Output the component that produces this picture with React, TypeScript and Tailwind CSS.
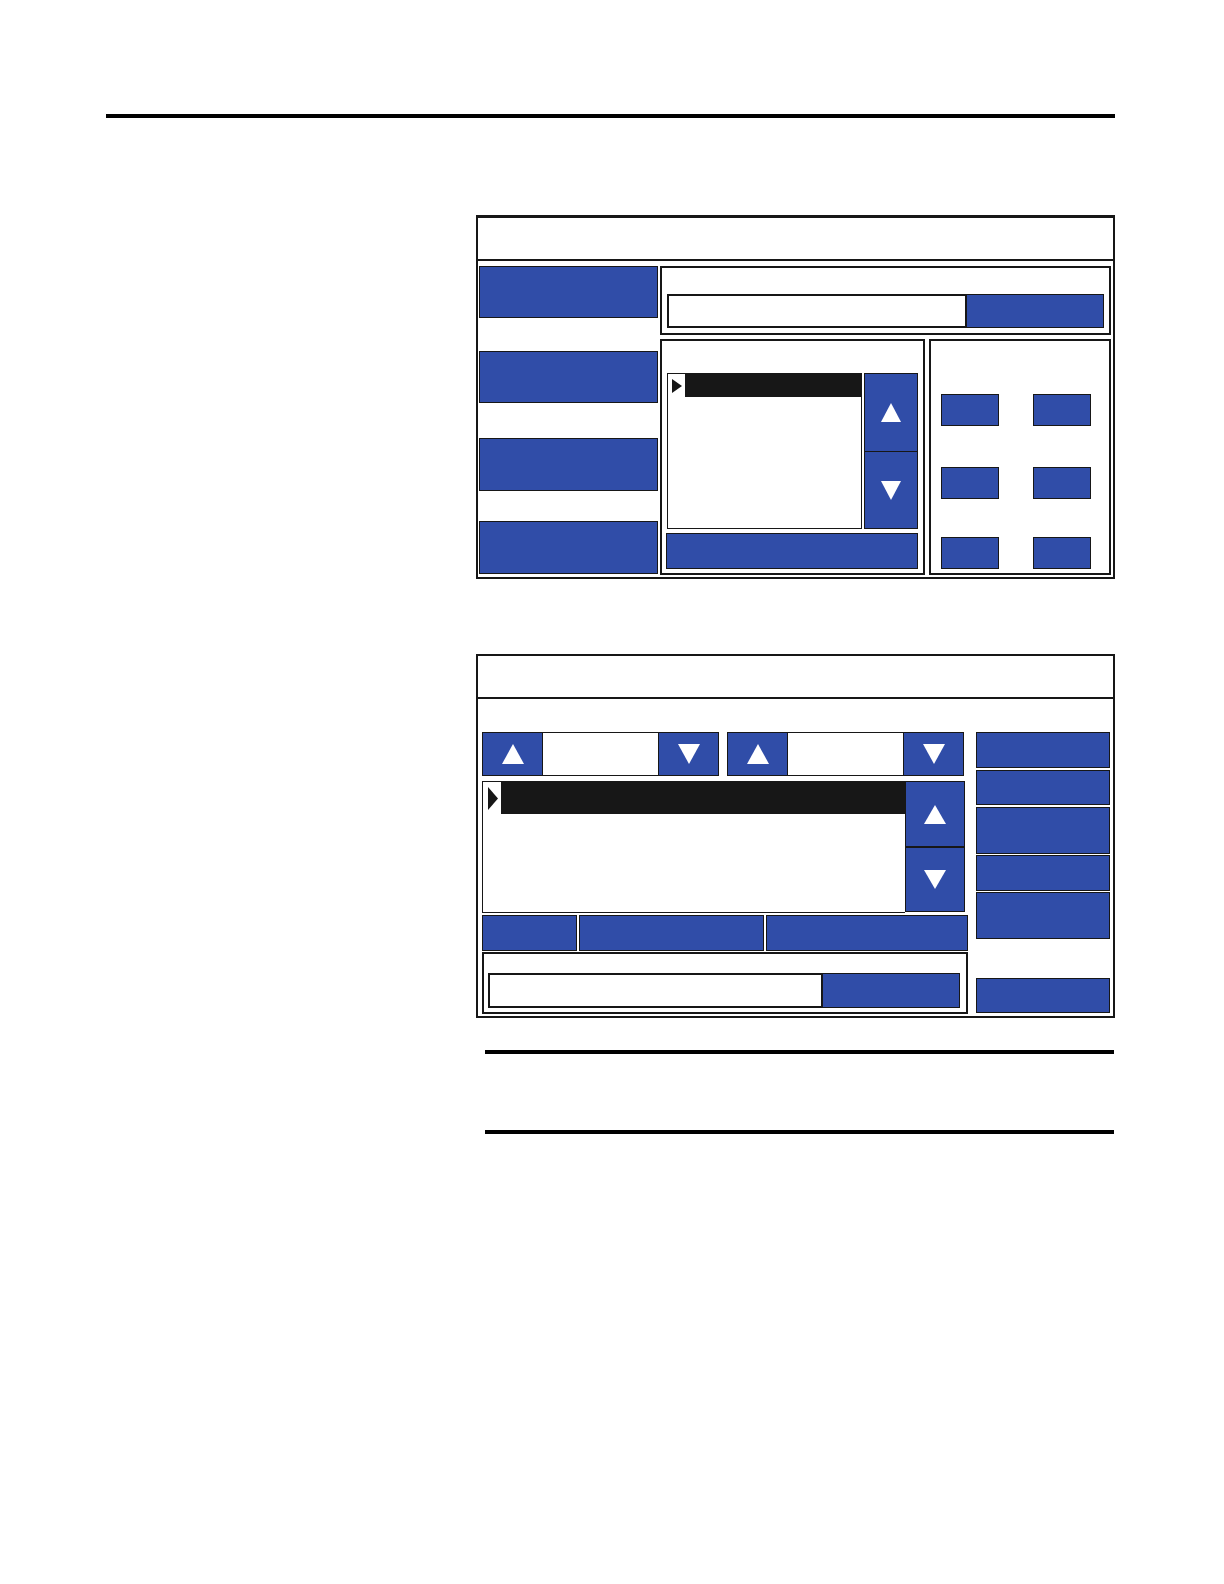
import { useState } from 'react'
import clsx from 'clsx'

type Direction = 'up' | 'down' | 'right'

const POINTS: Record<Direction, string> = {
  up: '0,20 10,0 20,20',
  down: '0,0 20,0 10,20',
  right: '0,0 20,10 0,20',
}

function Triangle({ direction, className }: { direction: Direction; className: string }) {
  return (
    <svg viewBox="0 0 20 20" preserveAspectRatio="none" className={className} aria-hidden="true">
      <polygon points={POINTS[direction]} fill="currentColor" />
    </svg>
  )
}

interface KeyProps {
  label: string
  className?: string
  children?: React.ReactNode
  onClick?: () => void
}

function Key({ label, className, children, onClick }: KeyProps) {
  return (
    <button
      type="button"
      aria-label={label}
      onClick={onClick}
      className={clsx(
        'flex items-center justify-center border-neutral-900 bg-[#304da8] text-white',
        className
      )}
    >
      {children}
    </button>
  )
}

function Entry({ label, size }: { label: string; size: string }) {
  return (
    <div className={clsx('flex', size)}>
      <input
        type="text"
        aria-label={label}
        className="min-w-0 flex-1 border-2 border-neutral-900 bg-white px-2 outline-none"
      />
      <Key label={`Confirm ${label}`} className="w-[137px] border border-l-0" />
    </div>
  )
}

function Stepper({ label }: { label: string }) {
  const [value, setValue] = useState('')
  const step = (by: number) => setValue(String(Number(value) + by))

  return (
    <div className="flex h-11 min-w-0 flex-1">
      <Key label={`${label} up`} className="w-[61px] shrink-0 border" onClick={() => step(1)}>
        <Triangle direction="up" className="h-5 w-[22px]" />
      </Key>
      <input
        type="text"
        aria-label={label}
        value={value}
        onChange={(e) => setValue(e.target.value)}
        className="w-0 min-w-0 flex-1 border-y border-neutral-900 bg-white text-center outline-none"
      />
      <Key label={`${label} down`} className="w-[61px] shrink-0 border" onClick={() => step(-1)}>
        <Triangle direction="down" className="h-5 w-[22px]" />
      </Key>
    </div>
  )
}

function SelectionScreen() {
  return (
    <section aria-label="Selection" className="border-2 border-t-[3px] border-neutral-900">
      <header className="h-[43px] border-b-2 border-neutral-900" />
      <div className="flex gap-0.5 pt-[5px] pr-0.5 pb-0.5 pl-px">
        <nav className="flex w-[179px] shrink-0 flex-col">
          <Key label="Menu 1" className="h-[52px] border" />
          <Key label="Menu 2" className="mt-[33px] h-[52px] border" />
          <Key label="Menu 3" className="mt-[35px] h-[53px] border" />
          <Key label="Menu 4" className="mt-[30px] h-[53px] border" />
        </nav>

        <div className="flex min-w-0 flex-1 flex-col gap-1">
          <div className="border-2 border-neutral-900 px-[5px] pt-[26px] pb-[5px]">
            <Entry label="name" size="h-[34px]" />
          </div>

          <div className="flex gap-1">
            <div className="min-w-0 flex-1 border-2 border-neutral-900 pt-8 pr-[5px] pb-1 pl-1">
              <div className="flex gap-0.5 pl-px">
                <ul role="listbox" aria-label="Items" className="h-[156px] min-w-0 flex-1 border border-neutral-900">
                  <li role="option" aria-selected="true" className="flex h-[23px]">
                    <span className="flex w-[17px] items-center justify-center text-neutral-900">
                      <Triangle direction="right" className="h-3.5 w-2.5" />
                    </span>
                    <span className="flex-1 bg-neutral-900" />
                  </li>
                </ul>
                <div className="flex w-[54px] shrink-0 flex-col">
                  <Key label="Scroll up" className="h-[78px] border border-b-0">
                    <Triangle direction="up" className="h-[19px] w-5" />
                  </Key>
                  <Key label="Scroll down" className="h-[78px] border">
                    <Triangle direction="down" className="h-[19px] w-5" />
                  </Key>
                </div>
              </div>
              <Key label="Select item" className="mt-1 h-9 w-full border" />
            </div>

            <div className="grid w-[182px] shrink-0 grid-cols-[58px_58px] grid-rows-[73px_70px_32px] gap-x-[34px] border-2 border-neutral-900 pt-[53px] pl-2.5">
              {[1, 2, 3, 4, 5, 6].map((n) => (
                <Key key={n} label={`Option ${n}`} className="h-8 border" />
              ))}
            </div>
          </div>
        </div>
      </div>
    </section>
  )
}

function EditScreen() {
  return (
    <section aria-label="Edit" className="border-2 border-neutral-900">
      <header className="h-[43px] border-b-2 border-neutral-900" />
      <div className="flex gap-2 pt-[33px] pr-[3px] pb-0.5 pl-1">
        <div className="min-w-0 flex-1">
          <div className="flex gap-2 pr-1">
            <Stepper label="First value" />
            <Stepper label="Second value" />
          </div>

          <div className="mt-[5px] flex items-start pr-[3px]">
            <ul
              role="listbox"
              aria-label="Entries"
              className="h-[132px] min-w-0 flex-1 border border-r-0 border-neutral-900"
            >
              <li role="option" aria-selected="true" className="flex h-8">
                <span className="flex w-[18px] items-center justify-end pr-[3px] text-neutral-900">
                  <Triangle direction="right" className="h-[23px] w-2.5" />
                </span>
                <span className="flex-1 bg-neutral-900" />
              </li>
            </ul>
            <div className="flex w-[60px] shrink-0 flex-col">
              <Key label="Scroll up" className="h-[66px] border">
                <Triangle direction="up" className="h-[19px] w-[22px]" />
              </Key>
              <Key label="Scroll down" className="h-[65px] border">
                <Triangle direction="down" className="h-[19px] w-[22px]" />
              </Key>
            </div>
          </div>

          <div className="mt-0.5 flex gap-0.5">
            <Key label="Action 1" className="h-9 w-[95px] border" />
            <Key label="Action 2" className="h-9 w-[185px] border" />
            <Key label="Action 3" className="h-9 flex-1 border" />
          </div>

          <div className="mt-px border-2 border-neutral-900 pt-[19px] pr-1.5 pb-1 pl-1">
            <Entry label="entry" size="h-[35px]" />
          </div>
        </div>

        <div className="flex w-[134px] shrink-0 flex-col">
          <Key label="Command 1" className="h-9 border" />
          <Key label="Command 2" className="mt-0.5 h-[35px] border" />
          <Key label="Command 3" className="mt-0.5 h-[47px] border" />
          <Key label="Command 4" className="mt-px h-9 border" />
          <Key label="Command 5" className="mt-px h-[47px] border" />
          <Key label="Return" className="mt-auto mb-px h-[35px] border" />
        </div>
      </div>
    </section>
  )
}

export default function App() {
  return (
    <div className="min-h-screen bg-white pt-[114px] pr-[109px] pb-16 pl-[106px] font-['Liberation_Sans',sans-serif] text-sm text-black">
      <hr className="border-t-4 border-black" />
      <main className="mt-[97px] ml-[370px]">
        <SelectionScreen />
        <div className="mt-[75px]">
          <EditScreen />
        </div>
        <aside className="mt-8 mr-px ml-[9px] h-[84px] border-y-4 border-black" />
      </main>
    </div>
  )
}
